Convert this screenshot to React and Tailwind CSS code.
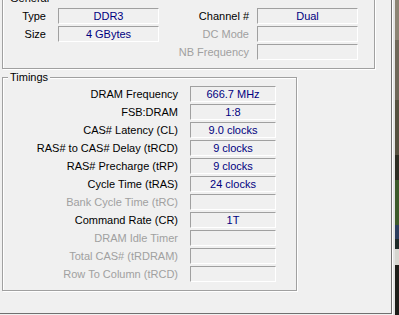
import React from "react";

const general = [
  ["Type", "DDR3", true, "Channel #", "Dual", true],
  ["Size", "4 GBytes", true, "DC Mode", "", false],
  [null, null, false, "NB Frequency", "", false],
];

const timings = [
  ["DRAM Frequency", "666.7 MHz", true],
  ["FSB:DRAM", "1:8", true],
  ["CAS# Latency (CL)", "9.0 clocks", true],
  ["RAS# to CAS# Delay (tRCD)", "9 clocks", true],
  ["RAS# Precharge (tRP)", "9 clocks", true],
  ["Cycle Time (tRAS)", "24 clocks", true],
  ["Bank Cycle Time (tRC)", "", false],
  ["Command Rate (CR)", "1T", true],
  ["DRAM Idle Timer", "", false],
  ["Total CAS# (tRDRAM)", "", false],
  ["Row To Column (tRCD)", "", false],
];

// sunken value field, gray top/left edge and white bottom/right edge
const Field = ({ value }) => (
  <div className="h-[16px] border border-[#a0a0a0] border-r-white border-b-white flex items-center justify-center text-[#000080] leading-none whitespace-nowrap">
    {value}
  </div>
);

const Label = ({ text, enabled, className = "" }) => (
  <div
    className={
      "h-[16px] flex items-center justify-end whitespace-nowrap leading-none " +
      (enabled ? "text-black " : "text-[#a0a0a0] ") +
      className
    }
  >
    {text}
  </div>
);

const GroupBox = ({ title, className = "", children }) => (
  <div
    className={
      "relative border border-[#a0a0a0] shadow-[inset_1px_1px_0_#fff,1px_1px_0_#fff] " +
      className
    }
  >
    <span className="absolute left-[5px] top-[-7px] px-[2px] bg-[#f0f0f0] leading-[13px] text-black">
      {title}
    </span>
    {children}
  </div>
);

export default function App() {
  return (
    <div className="w-[399px] h-[315px] bg-[#f0f0f0] flex overflow-hidden font-['Liberation_Sans',Arial,sans-serif] text-[11px]">
      <div className="w-[392px] h-[314px] shrink-0 border-r border-b border-[#707070] flex flex-col">
        <GroupBox title="General" className="mt-[-2px] ml-[2px] w-[373px] h-[71px]">
          <div className="grid grid-cols-[55px_101px_98px_101px] gap-y-[2px] pt-[9px]">
            {general.map((r, i) => (
              <React.Fragment key={i}>
                {r[0] ? <Label text={r[0]} enabled={r[2]} className="pr-[12px]" /> : <div />}
                {r[0] ? <Field value={r[1]} /> : <div />}
                <Label text={r[3]} enabled={r[5]} className="pr-[8px]" />
                <Field value={r[4]} />
              </React.Fragment>
            ))}
          </div>
        </GroupBox>

        <GroupBox title="Timings" className="mt-[8px] ml-[2px] w-[295px] h-[214px]">
          <div className="grid grid-cols-[175px_86px] gap-x-[12px] gap-y-[2px] pt-[8px]">
            {timings.map(([label, value, enabled]) => (
              <React.Fragment key={label}>
                <Label text={label} enabled={enabled} />
                <Field value={value} />
              </React.Fragment>
            ))}
          </div>
        </GroupBox>
      </div>

      <div className="w-[3px] h-full flex">
        <div className="w-[1px] bg-white" />
        <div className="w-[2px] bg-[#e4e4e4]" />
      </div>

      {/* bit of desktop wallpaper showing past the window edge */}
      <div className="flex-1 h-full flex flex-col">
        <div className="h-[40px] bg-[#8c8474]" />
        <div className="h-[60px] bg-[#6e6758]" />
        <div className="h-[55px] bg-[#55503f]" />
        <div className="h-[25px] bg-[#2c2c22]" />
        <div className="h-[45px] bg-[#3d5a2a]" />
        <div className="h-[14px] bg-[#2c3e5e]" />
        <div className="h-[10px] bg-[#1e2a28]" />
        <div className="h-[16px] bg-[#d6d6d0]" />
        <div className="flex-1 bg-[#1e1e1a]" />
      </div>
    </div>
  );
}
